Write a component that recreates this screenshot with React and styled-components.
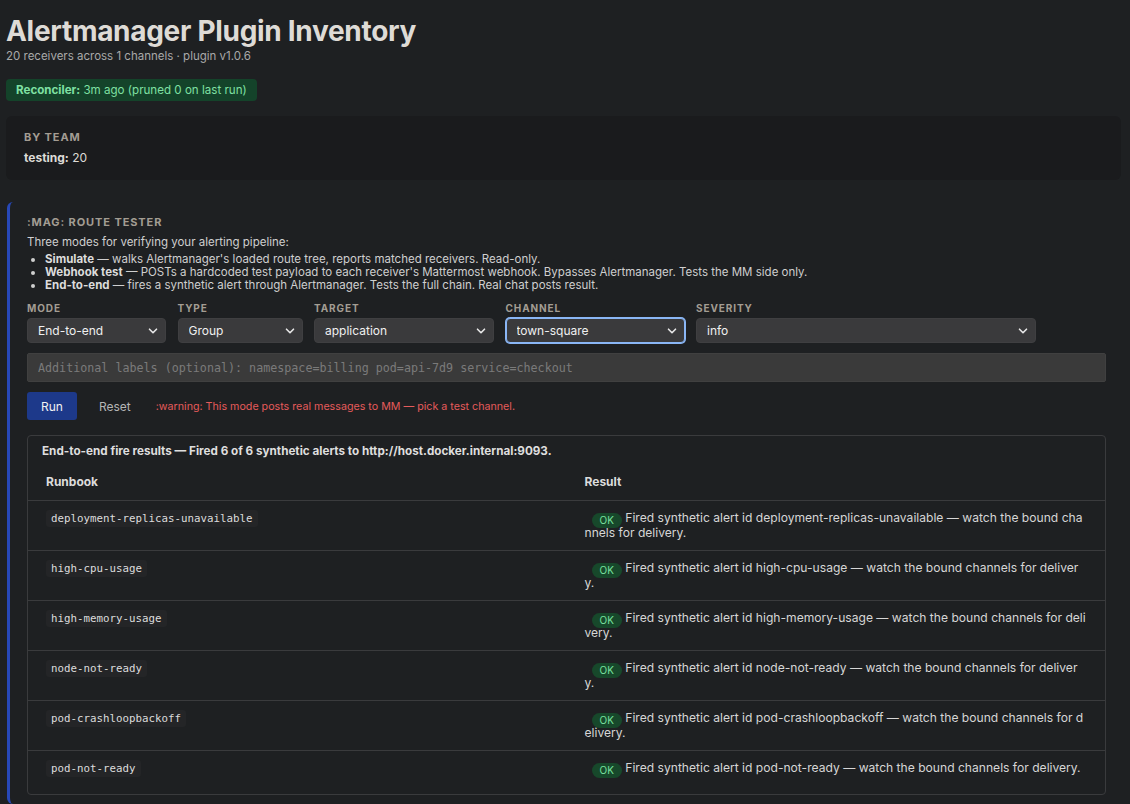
import React from "react";
import styled, { createGlobalStyle } from "styled-components";

const Global = createGlobalStyle`
  html, body { margin: 0; padding: 0; background: #1e2022; }
  body { font-family: Inter, "Noto Sans", sans-serif; color: #d2d2d2; }
  * { box-sizing: border-box; }
`;

const Page = styled.div`
  padding: 14px 9px 0 6px;
  min-height: 804px;
`;

const Title = styled.h1`
  margin: 0;
  font-size: 28px;
  line-height: 34px;
  font-weight: 700;
  color: #dedbd6;
  letter-spacing: -0.3px;
`;

const Subtitle = styled.div`
  font-size: 11.5px;
  line-height: 16px;
  color: #a9a9a9;
`;

const Badge = styled.div`
  display: inline-block;
  margin-top: 15px;
  padding: 4px 10px;
  font-size: 11.6px;
  line-height: 14px;
  background: #14432a;
  color: #7fe0a3;
  border-radius: 4px;
  b { font-weight: 700; }
`;

const Card = styled.div`
  margin-top: 15px;
  background: #1a1b1d;
  border-radius: 6px;
  padding: 14px 18px 15px;
`;

const SectionLabel = styled.div`
  font-size: ${(p) => p.$size || 11}px;
  line-height: ${(p) => (p.$size ? 12 : 14)}px;
  font-weight: 700;
  letter-spacing: 0.9px;
  text-transform: uppercase;
  color: #a39d93;
`;

const TeamLine = styled.div`
  margin-top: 7px;
  font-size: 12px;
  line-height: 14px;
  color: #dedbd6;
  b { font-weight: 700; }
`;

const Section = styled.section`
  margin-top: 22px;
  margin-left: 1px;
  border-left: 3px solid #2748b8;
  border-radius: 6px 0 0 6px;
  padding: 13px 15px 9px 17px;
`;

const Intro = styled.div`
  margin-top: 7px;
  font-size: 11.5px;
  line-height: 13px;
  color: #cfcfcf;
`;

const Bullets = styled.ul`
  margin: 4px 0 0;
  padding-left: 18px;
  font-size: 11.5px;
  line-height: 13px;
  color: #cfcfcf;
  b { font-weight: 700; color: #dcdcdc; }
`;

const Controls = styled.div`
  display: flex;
  gap: 11.5px;
  margin-top: 10px;
`;

const Field = styled.div`
  display: flex;
  flex-direction: column;
  gap: 4px;
  width: ${(p) => p.$w}px;
`;

const SelectWrap = styled.div`
  position: relative;
  height: 25px;
`;

const SelectBox = styled.select`
  appearance: none;
  -webkit-appearance: none;
  width: 100%;
  height: 25px;
  background: #3a3a3c;
  color: #f0f0f0;
  font-family: Inter, sans-serif;
  font-size: 12px;
  padding: 0 24px 0 10px;
  border-radius: 4px;
  border: 1px solid ${(p) => (p.$focus ? "#8ab6f5" : "#3f3f41")};
  box-shadow: ${(p) => (p.$focus ? "0 0 0 1px #8ab6f5" : "none")};
  outline: none;
`;

const Chevron = styled.svg`
  position: absolute;
  right: 8px;
  top: 8px;
  pointer-events: none;
`;

const LabelsInput = styled.input`
  display: block;
  width: 100%;
  margin-top: 10px;
  height: 29px;
  background: #3a3a3a;
  border: 1px solid #404040;
  border-radius: 2px;
  padding: 0 10px;
  font-family: "DejaVu Sans Mono", "Liberation Mono", monospace;
  font-size: 11.7px;
  color: #ddd;
  outline: none;
  &::placeholder { color: #7a7a7a; }
`;

const ActionRow = styled.div`
  display: flex;
  align-items: center;
  margin-top: 10px;
`;

const RunButton = styled.button`
  height: 28px;
  padding: 0 14px;
  background: #1d398a;
  color: #f2f2f2;
  font-family: Inter, sans-serif;
  font-size: 12px;
  border: none;
  border-radius: 3px;
`;

const ResetButton = styled.button`
  height: 28px;
  padding: 0 12px;
  margin-left: 10px;
  background: transparent;
  color: #b5b5b5;
  font-family: Inter, sans-serif;
  font-size: 12px;
  border: none;
`;

const Warning = styled.span`
  margin-left: 13px;
  font-size: 10.7px;
  color: #e55b5b;
`;

const Results = styled.div`
  margin-top: 15px;
  border: 1px solid #3a3b3d;
  border-radius: 4px;
  padding-bottom: 8px;
`;

const ResultsHead = styled.div`
  padding: 8px 14px 0;
  font-size: 11.7px;
  line-height: 15px;
  font-weight: 700;
  color: #dedede;
`;

const Table = styled.table`
  width: 100%;
  margin-top: 4px;
  border-collapse: collapse;
  table-layout: fixed;
`;

const Th = styled.th`
  text-align: left;
  padding: 11px 18px;
  font-size: 12px;
  line-height: 15px;
  font-weight: 700;
  color: #dcdcdc;
`;

const Td = styled.td`
  padding: 9px 18px 10px;
  border-top: 1px solid #3a3b3d;
  vertical-align: top;
  font-size: 12.1px;
  line-height: 15px;
  color: #d6d6d6;
  word-break: break-all;
`;

const Code = styled.code`
  font-family: "DejaVu Sans Mono", "Liberation Mono", monospace;
  font-size: 10.8px;
  line-height: 15px;
  padding: 2px 5px;
  background: #242527;
  border-radius: 3px;
  color: #dcdcdc;
  word-break: normal;
`;

const Ok = styled.span`
  display: inline-block;
  margin-left: 7px;
  padding: 0 8px;
  height: 15px;
  line-height: 15px;
  font-size: 10px;
  border-radius: 8px;
  background: #17482b;
  color: #78e09f;
  vertical-align: top;
  transform: translateY(3px);
`;

const ChevronIcon = () => (
  <Chevron width="10" height="10" viewBox="0 0 10 10">
    <path d="M1.5 3.2 L5 6.7 L8.5 3.2" fill="none" stroke="#e8e8e8" strokeWidth="1.6" strokeLinecap="round" strokeLinejoin="round" />
  </Chevron>
);

const fields = [
  { label: "Mode", value: "End-to-end", w: 139 },
  { label: "Type", value: "Group", w: 125 },
  { label: "Target", value: "application", w: 180 },
  { label: "Channel", value: "town-square", w: 179, focus: true },
  { label: "Severity", value: "info", w: 340 },
];

const rows = [
  "deployment-replicas-unavailable",
  "high-cpu-usage",
  "high-memory-usage",
  "node-not-ready",
  "pod-crashloopbackoff",
  "pod-not-ready",
];

export default function App() {
  return (
    <>
      <Global />
      <Page>
        <Title>Alertmanager Plugin Inventory</Title>
        <Subtitle>20 receivers across 1 channels · plugin v1.0.6</Subtitle>
        <Badge>
          <b>Reconciler:</b> 3m ago (pruned 0 on last run)
        </Badge>
        <Card>
          <SectionLabel>By team</SectionLabel>
          <TeamLine>
            <b>testing:</b> 20
          </TeamLine>
        </Card>
        <Section>
          <SectionLabel>:mag: Route tester</SectionLabel>
          <Intro>Three modes for verifying your alerting pipeline:</Intro>
          <Bullets>
            <li>
              <b>Simulate</b> — walks Alertmanager's loaded route tree, reports matched receivers. Read-only.
            </li>
            <li>
              <b>Webhook test</b> — POSTs a hardcoded test payload to each receiver's Mattermost webhook. Bypasses Alertmanager. Tests the MM side only.
            </li>
            <li>
              <b>End-to-end</b> — fires a synthetic alert through Alertmanager. Tests the full chain. Real chat posts result.
            </li>
          </Bullets>
          <Controls>
            {fields.map((f) => (
              <Field key={f.label} $w={f.w}>
                <SectionLabel $size={10}>{f.label}</SectionLabel>
                <SelectWrap>
                  <SelectBox $focus={f.focus} defaultValue={f.value}>
                    <option>{f.value}</option>
                  </SelectBox>
                  <ChevronIcon />
                </SelectWrap>
              </Field>
            ))}
          </Controls>
          <LabelsInput placeholder="Additional labels (optional): namespace=billing pod=api-7d9 service=checkout" />
          <ActionRow>
            <RunButton>Run</RunButton>
            <ResetButton>Reset</ResetButton>
            <Warning>:warning: This mode posts real messages to MM — pick a test channel.</Warning>
          </ActionRow>
          <Results>
            <ResultsHead>
              End-to-end fire results — Fired 6 of 6 synthetic alerts to http://host.docker.internal:9093.
            </ResultsHead>
            <Table>
              <thead>
                <tr>
                  <Th>Runbook</Th>
                  <Th>Result</Th>
                </tr>
              </thead>
              <tbody>
                {rows.map((r) => (
                  <tr key={r}>
                    <Td>
                      <Code>{r}</Code>
                    </Td>
                    <Td>
                      <Ok>OK</Ok> Fired synthetic alert id {r} — watch the bound channels for delivery.
                    </Td>
                  </tr>
                ))}
              </tbody>
            </Table>
          </Results>
        </Section>
      </Page>
    </>
  );
}
